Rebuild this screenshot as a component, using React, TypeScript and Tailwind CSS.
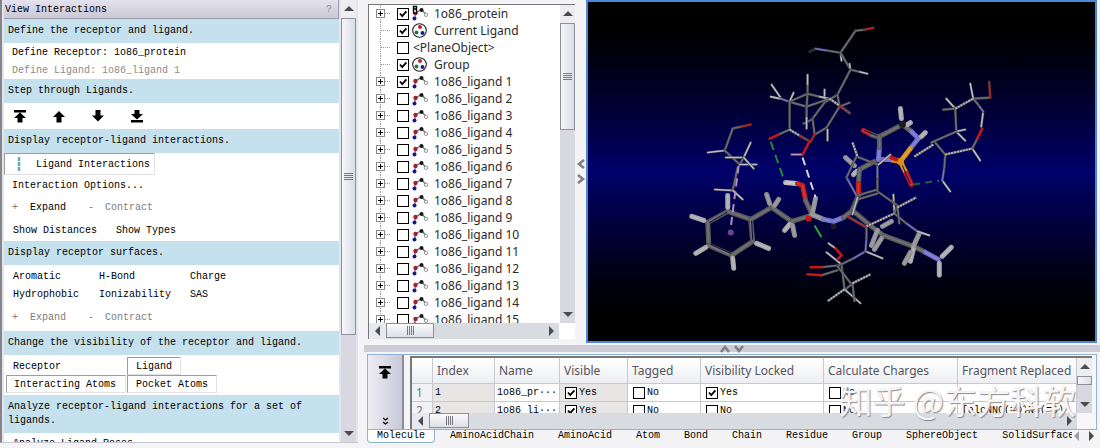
import type { ReactNode } from "react";
import clsx from "clsx";

const UI = "font-['Noto_Sans',sans-serif]";
const MONO = "font-['Liberation_Mono',monospace]";

const CARBON = "#6c6c70";
const HYDROGEN = "#bcbcc2";
const NITROGEN = "#7070cc";
const OXYGEN = "#c41818";
const SULFUR = "#d99210";
const STEM = "#5a5a5c";
const CAP = "#a9a9ad";
const CAP_DARK = "#8f8f92";

type Stick = [number, number, number, number, string];

// residues of the receptor, drawn as thin sticks
const thinSticks: Stick[] = [
  [810, 52, 816, 49, "#222230"],
  [816, 49, 829, 51, NITROGEN],
  [829, 51, 841, 53, CARBON],
  [841, 53, 856, 31, CARBON],
  [856, 31, 865, 30, CARBON],
  [865, 30, 874, 28, OXYGEN],
  [841, 53, 842, 61, HYDROGEN],
  [841, 53, 851, 70, CARBON],
  [851, 70, 850, 64, HYDROGEN],
  [851, 70, 860, 72, CARBON],
  [860, 72, 868, 74, HYDROGEN],
  [851, 70, 838, 95, CARBON],
  [838, 95, 825, 103, CARBON],
  [825, 103, 813, 119, CARBON],
  [813, 119, 815, 135, CARBON],
  [815, 135, 827, 128, CARBON],
  [827, 128, 840, 107, CARBON],
  [840, 107, 838, 95, CARBON],
  [825, 90, 825, 99, HYDROGEN],
  [828, 141, 828, 130, HYDROGEN],
  [804, 124, 812, 120, CARBON],
  [840, 107, 850, 103, CARBON],
  [772, 85, 781, 98, HYDROGEN],
  [771, 97, 780, 99, HYDROGEN],
  [781, 99, 793, 103, NITROGEN],
  [793, 103, 807, 107, CARBON],
  [807, 107, 807, 118, CARBON],
  [807, 118, 807, 129, HYDROGEN],
  [807, 107, 808, 94, CARBON],
  [808, 94, 808, 85, CARBON],
  [808, 85, 808, 75, HYDROGEN],
  [808, 94, 790, 102, CARBON],
  [808, 94, 820, 97, CARBON],
  [820, 97, 829, 99, HYDROGEN],
  [807, 107, 830, 99, CARBON],
  [790, 102, 794, 93, HYDROGEN],
  [790, 102, 790, 130, CARBON],
  [790, 130, 779, 135, CARBON],
  [815, 135, 811, 142, OXYGEN],
  [803, 155, 792, 155, "#c89ab8"],
  [733, 129, 742, 127, CARBON],
  [742, 127, 751, 125, OXYGEN],
  [733, 129, 725, 151, CARBON],
  [725, 151, 708, 153, HYDROGEN],
  [725, 151, 740, 165, CARBON],
  [726, 158, 744, 158, HYDROGEN],
  [744, 158, 751, 143, HYDROGEN],
  [744, 158, 740, 165, CARBON],
  [740, 165, 757, 165, HYDROGEN],
  [744, 158, 754, 169, HYDROGEN],
  [738, 168, 733, 191, CARBON],
  [733, 191, 715, 190, HYDROGEN],
  [733, 191, 743, 200, HYDROGEN],
  [829, 244, 836, 249, HYDROGEN],
  [827, 253, 842, 265, HYDROGEN],
  [822, 268, 840, 266, CARBON],
  [822, 276, 838, 271, CARBON],
  [842, 265, 845, 290, CARBON],
  [838, 267, 852, 285, CARBON],
  [852, 285, 845, 291, CARBON],
  [845, 290, 861, 304, HYDROGEN],
  [853, 284, 855, 302, CARBON],
  [842, 265, 854, 259, CARBON],
  [854, 259, 866, 252, NITROGEN],
  [866, 252, 883, 259, HYDROGEN],
  [866, 252, 867, 239, NITROGEN],
  [867, 239, 867, 227, CARBON],
  [895, 214, 894, 195, HYDROGEN],
  [895, 214, 907, 224, CARBON],
  [907, 224, 918, 232, NITROGEN],
  [918, 232, 930, 236, HYDROGEN],
  [878, 192, 898, 206, CARBON],
  [898, 206, 895, 214, CARBON],
  [898, 206, 900, 224, CARBON],
  [878, 192, 878, 178, CARBON],
  [878, 178, 878, 164, NITROGEN],
  [878, 190, 858, 196, CARBON],
  [878, 194, 858, 200, CARBON],
  [858, 198, 847, 178, NITROGEN],
  [847, 178, 857, 157, CARBON],
  [857, 157, 878, 165, CARBON],
  [858, 198, 853, 215, HYDROGEN],
  [879, 165, 891, 155, HYDROGEN],
  [943, 181, 951, 192, HYDROGEN],
  [943, 181, 945, 168, NITROGEN],
  [945, 168, 946, 155, CARBON],
  [946, 155, 935, 142, CARBON],
  [973, 149, 981, 161, HYDROGEN],
  [973, 149, 978, 139, CARBON],
  [982, 127, 984, 112, HYDROGEN],
  [984, 112, 979, 105, NITROGEN],
  [979, 105, 974, 99, CARBON],
  [974, 99, 991, 98, CARBON],
  [991, 98, 990, 82, OXYGEN],
  [974, 99, 971, 84, HYDROGEN],
  [956, 109, 947, 99, HYDROGEN],
  [956, 109, 944, 110, CARBON],
  [956, 109, 957, 132, CARBON],
  [957, 132, 966, 141, HYDROGEN],
  [957, 132, 966, 130, HYDROGEN],
  [957, 132, 932, 143, CARBON],
];

const mediumSticks: Stick[] = [
  [779, 135, 770, 139, OXYGEN],
  [810, 142, 803, 155, OXYGEN],
  [836, 249, 842, 256, OXYGEN],
  [842, 256, 838, 260, OXYGEN],
  [811, 268, 822, 268, OXYGEN],
  [808, 275, 822, 276, OXYGEN],
  [978, 139, 983, 129, OXYGEN],
];

// partial double bonds, shown as dotted sticks
const dottedSticks: Stick[] = [
  [790, 130, 800, 136, HYDROGEN],
  [800, 136, 809, 141, OXYGEN],
  [830, 99, 840, 106, HYDROGEN],
  [840, 106, 851, 114, OXYGEN],
  [956, 109, 974, 99, HYDROGEN],
  [946, 155, 973, 149, HYDROGEN],
  [934, 145, 915, 157, HYDROGEN],
  [853, 143, 858, 157, HYDROGEN],
  [867, 227, 895, 214, HYDROGEN],
  [898, 208, 917, 198, HYDROGEN],
  [848, 217, 867, 228, OXYGEN],
  [845, 290, 828, 302, HYDROGEN],
  [853, 284, 871, 275, HYDROGEN],
];

// the docked ligand, drawn as thick sticks
const thickSticks: Stick[] = [
  [728, 212, 708, 223, STEM],
  [708, 223, 709, 246, STEM],
  [709, 246, 732, 256, STEM],
  [732, 256, 753, 242, STEM],
  [753, 242, 751, 220, STEM],
  [751, 220, 728, 212, STEM],
  [728, 208, 728, 196, CAP],
  [704, 221, 692, 217, CAP],
  [706, 248, 696, 254, CAP],
  [733, 259, 734, 269, CAP],
  [757, 244, 769, 249, CAP],
  [751, 220, 772, 208, STEM],
  [772, 208, 792, 222, STEM],
  [792, 222, 812, 216, STEM],
  [770, 204, 767, 195, CAP_DARK],
  [775, 206, 779, 200, CAP_DARK],
  [790, 225, 785, 231, CAP],
  [793, 226, 795, 236, CAP_DARK],
  [786, 183, 797, 184, "#bfbfc4"],
  [798, 184, 803, 186, OXYGEN],
  [803, 186, 806, 201, OXYGEN],
  [806, 201, 812, 214, STEM],
  [813, 213, 816, 199, CAP_DARK],
  [812, 215, 824, 220, CAP_DARK],
  [824, 220, 834, 222, NITROGEN],
  [834, 222, 844, 218, NITROGEN],
  [844, 218, 853, 211, STEM],
  [853, 211, 872, 227, STEM],
  [872, 227, 884, 236, STEM],
  [884, 236, 914, 247, STEM],
  [914, 247, 926, 253, STEM],
  [926, 253, 939, 260, NITROGEN],
  [943, 257, 952, 248, CAP],
  [940, 264, 940, 276, CAP],
  [878, 231, 872, 246, CAP_DARK],
  [882, 239, 875, 250, CAP_DARK],
  [883, 227, 892, 222, CAP_DARK],
  [914, 247, 920, 234, CAP_DARK],
  [914, 250, 911, 262, CAP],
  [911, 253, 905, 264, CAP_DARK],
  [864, 131, 872, 135, OXYGEN],
  [872, 135, 880, 138, STEM],
  [880, 137, 903, 125, STEM],
  [903, 125, 912, 132, STEM],
  [912, 132, 919, 139, NITROGEN],
  [919, 139, 911, 149, NITROGEN],
  [911, 149, 901, 162, SULFUR],
  [901, 162, 890, 160, SULFUR],
  [890, 160, 879, 160, NITROGEN],
  [879, 160, 880, 148, NITROGEN],
  [880, 148, 880, 137, STEM],
  [902, 119, 901, 109, CAP],
  [908, 125, 911, 123, CAP],
  [922, 137, 926, 133, CAP],
  [875, 162, 860, 170, STEM],
  [855, 166, 846, 158, CAP_DARK],
  [857, 172, 854, 175, CAP],
  [860, 170, 859, 184, STEM],
  [859, 184, 859, 196, OXYGEN],
  [859, 196, 853, 210, STEM],
  [901, 162, 907, 174, SULFUR],
  [907, 174, 912, 185, OXYGEN],
];

function Molecule() {
  return (
    <svg
      viewBox="588 3 508 338"
      preserveAspectRatio="xMidYMid meet"
      className="h-full w-full"
      role="img"
      aria-label="Ligand in the binding site"
      strokeLinecap="round"
    >
      {thickSticks.map(([x1, y1, x2, y2, c], i) => (
        <g key={i}>
          <line x1={x1} y1={y1} x2={x2} y2={y2} stroke={c} strokeWidth="5" />
          <line x1={x1} y1={y1} x2={x2} y2={y2} stroke="#fff" strokeOpacity="0.14" strokeWidth="2" />
        </g>
      ))}
      {thinSticks.map(([x1, y1, x2, y2, c], i) => (
        <g key={i}>
          <line x1={x1} y1={y1} x2={x2} y2={y2} stroke="#3c3c42" strokeWidth="2.6" />
          <line x1={x1} y1={y1} x2={x2} y2={y2} stroke={c} strokeWidth="1.6" />
        </g>
      ))}
      {dottedSticks.map(([x1, y1, x2, y2, c], i) => (
        <g key={i} strokeLinecap="butt">
          <line x1={x1} y1={y1} x2={x2} y2={y2} stroke="#56565a" strokeWidth="2.6" />
          <line x1={x1} y1={y1} x2={x2} y2={y2} stroke={c} strokeWidth="1.8" strokeDasharray="2 1" />
        </g>
      ))}
      {mediumSticks.map(([x1, y1, x2, y2, c], i) => (
        <line key={i} x1={x1} y1={y1} x2={x2} y2={y2} stroke={c} strokeWidth="2.6" />
      ))}
      {/* gap between the two strokes of each double bond */}
      <path
        d="M727 213l-17 10M711 245l20 9M752 222l1 18M903 166l8 18M865 131l12 5"
        stroke="#0c0c30"
        strokeWidth="1"
      />
      <circle cx="903" cy="125" r="3.5" fill="#1c1c1e" />
      <circle cx="834" cy="227" r="3" fill="#1c1c28" />
      <circle cx="901" cy="162" r="3.5" fill={SULFUR} />
      <path d="M892 158l5 2" stroke={OXYGEN} strokeWidth="4" />
      <circle cx="809" cy="219" r="3" fill={OXYGEN} />
      <circle cx="731" cy="233" r="3" fill="#6a4496" />
      <g fill="none" strokeLinecap="butt" strokeWidth="2">
        <path d="M771 142l14 40" stroke="#1f8a32" strokeDasharray="9 5" />
        <path d="M815 226l7 12" stroke="#24a838" />
        <path d="M914 185l26-4" stroke="#146a35" strokeDasharray="7 5" />
        <path d="M803 158l13 40" stroke="#d8d8e4" strokeDasharray="8 5" />
        <path d="M739 166l-8 62" stroke="#b38cc6" strokeDasharray="8 5" />
      </g>
    </svg>
  );
}

type Direction = "up" | "down" | "left" | "right";

function Triangle({ dir }: { dir: Direction }) {
  const d = {
    up: "M0 7L5 2l5 5z",
    down: "M0 3l5 5 5-5z",
    left: "M7 0L2 5l5 5z",
    right: "M3 0l5 5-5 5z",
  }[dir];
  return (
    <svg viewBox="0 0 10 10" className="size-[10px] shrink-0" aria-hidden="true">
      <path d={d} fill="#4b4b4f" />
    </svg>
  );
}

function Chevron({ dir }: { dir: Direction }) {
  const d = {
    up: "M1 8l4-5 4 5",
    down: "M1 2l4 5 4-5",
    left: "M8 1L3 5l5 4",
    right: "M2 1l5 4-5 4",
  }[dir];
  return (
    <svg viewBox="0 0 10 10" className="size-[10px] shrink-0" aria-hidden="true">
      <path d={d} fill="none" stroke="#808084" strokeWidth="2.6" />
    </svg>
  );
}

function Grip({ vertical }: { vertical?: boolean }) {
  return (
    <svg viewBox="0 0 9 9" className="size-[9px] shrink-0" aria-hidden="true">
      <path
        d={vertical ? "M1.5 0v9M3.5 0v9M5.5 0v9M7.5 0v9" : "M0 1.5h9M0 3.5h9M0 5.5h9M0 7.5h9"}
        stroke="#77777d"
      />
    </svg>
  );
}

function VScroll({ thumb, grip = true }: { thumb: string; grip?: boolean }) {
  return (
    <div className="flex w-[15px] shrink-0 flex-col items-center bg-[#d8d9e0]">
      <button aria-label="Scroll up" className="flex h-[18px] w-full shrink-0 items-center justify-center bg-[#eeeef1]">
        <Triangle dir="up" />
      </button>
      <div className="flex min-h-0 w-full flex-1">
        <div
          className={clsx(
            "flex w-full items-center justify-center border border-[#8d9098] bg-linear-to-r from-[#f6f7fa] to-[#d9dde6]",
            thumb
          )}
        >
          {grip && <Grip />}
        </div>
      </div>
      <button aria-label="Scroll down" className="flex h-[18px] w-full shrink-0 items-center justify-center">
        <Triangle dir="down" />
      </button>
    </div>
  );
}

function HScroll({ thumb }: { thumb: string }) {
  return (
    <div className="flex h-[16px] shrink-0 items-center bg-[#d8dbe0]">
      <button aria-label="Scroll left" className="flex h-full w-[17px] items-center justify-center bg-[#e8e9ee]">
        <Triangle dir="left" />
      </button>
      <div className="h-full flex-1">
        <div
          className={clsx(
            "flex h-[15px] items-center justify-center border border-[#8d9098] bg-linear-to-b from-[#fbfbfd] to-[#dcdfe6]",
            thumb
          )}
        >
          <Grip vertical />
        </div>
      </div>
      <button aria-label="Scroll right" className="flex h-full w-[17px] items-center justify-center">
        <Triangle dir="right" />
      </button>
    </div>
  );
}

function CheckBox({ checked, label }: { checked: boolean; label: string }) {
  return (
    <span className="grid size-[12px] shrink-0">
      <input
        type="checkbox"
        defaultChecked={checked}
        aria-label={label}
        className="peer col-start-1 row-start-1 size-[12px] appearance-none border border-black bg-white"
      />
      <svg
        viewBox="0 0 12 12"
        className="pointer-events-none invisible col-start-1 row-start-1 size-[12px] peer-checked:visible"
        aria-hidden="true"
      >
        <path d="M3 5.5l2.2 2.6L9.4 3.4" fill="none" stroke="#000" strokeWidth="1.8" />
      </svg>
    </span>
  );
}

function SectionTitle({ children }: { children: ReactNode }) {
  return <h2 className="bg-[#c5e1ed] px-1 py-[5px] leading-[14px]">{children}</h2>;
}

const inset = "border border-[#e2e2e6] border-t-[#9b9ba0] border-l-[#9b9ba0]";

function ExpandRow({ enabled }: { enabled?: boolean }) {
  return (
    <div className="flex items-center pl-2">
      <button disabled={!enabled} className={clsx("flex w-[76px]", !enabled && "text-[#7d7d7d]")}>
        <span className="w-[18px] text-left text-[#7d7d7d]">+</span>Expand
      </button>
      <button disabled className="flex text-[#7d7d7d]">
        <span className="w-[17px] text-left">-</span>Contract
      </button>
    </div>
  );
}

const stepIcons = [
  { label: "First ligand", d: "M0 0h12v2.5H0zM6 2.5l6 5.5H8.5v4.5h-5V8H0z" },
  { label: "Previous ligand", d: "M6 1l6 6H8.5v5.5h-5V7H0z" },
  { label: "Next ligand", d: "M3.5 0h5v5.5H12l-6 6-6-6h3.5z" },
  { label: "Last ligand", d: "M3.5 0h5v4H12L6 9.5 0 4h3.5zM0 10h12v2.5H0z" },
];

function InteractionsPanel() {
  return (
    <aside className={clsx("mb-[2px] flex w-[358px] shrink-0 overflow-hidden border-b border-l-2 border-[#c8c8ce] border-l-[#85858c] text-[10px] text-black", MONO)}>
      <div className="flex min-w-0 flex-1 flex-col border-l-2 border-[#e4e4ec]">
        <header className="flex h-[19px] shrink-0 items-center justify-between border-r border-b border-[#9c9ca6] bg-linear-to-b from-[#e4e2ee] to-[#c9c8d6] px-px">
          <h1>View Interactions</h1>
          <button className="px-[5px] text-[#8b8b93]" aria-label="Help">?</button>
        </header>
        <SectionTitle>Define the receptor and ligand.</SectionTitle>
        <div className="flex flex-col items-start bg-white px-2">
          <button className="h-[18px]">Define Receptor: 1o86_protein</button>
          <button className="h-[18px] text-[#8a8a8a]" disabled>Define Ligand: 1o86_ligand 1</button>
        </div>
        <SectionTitle>Step through Ligands.</SectionTitle>
        <div className="flex h-[26px] shrink-0 items-center gap-[27px] bg-white px-[10px]">
          {stepIcons.map((s) => (
            <button key={s.label} aria-label={s.label}>
              <svg viewBox="0 0 12 13" className="h-[13px] w-[12px]">
                <path d={s.d} />
              </svg>
            </button>
          ))}
        </div>
        <SectionTitle>Display receptor-ligand interactions.</SectionTitle>
        <div className="grid grid-rows-[22px_20px_24px_22px] bg-white">
          <button className={clsx("flex items-center gap-[15px] justify-self-start pr-1 pl-[12px] whitespace-nowrap", inset)}>
            <svg viewBox="0 0 4 14" className="h-[14px] w-[4px] shrink-0" aria-hidden="true">
              <path d="M2 0v14" stroke="#62aac6" strokeWidth="2.5" strokeDasharray="4 1" />
            </svg>
            Ligand Interactions
          </button>
          <button className="justify-self-start px-2">Interaction Options...</button>
          <ExpandRow enabled />
          <div className="flex gap-[19px] pl-[9px]">
            <button>Show Distances</button>
            <button>Show Types</button>
          </div>
        </div>
        <SectionTitle>Display receptor surfaces.</SectionTitle>
        <div className="bg-white pt-[2px]">
          <div className="grid auto-rows-[18px] grid-cols-[86px_91px_1fr] justify-items-start pl-[9px]">
            {["Aromatic", "H-Bond", "Charge", "Hydrophobic", "Ionizability", "SAS"].map((name) => (
              <button key={name}>{name}</button>
            ))}
          </div>
          <div className="grid h-[28px]">
            <ExpandRow />
          </div>
        </div>
        <SectionTitle>Change the visibility of the receptor and ligand.</SectionTitle>
        <div className="grid auto-rows-[18px] grid-cols-[120px_1fr] gap-x-px bg-white px-[2px] py-[2px]">
          <button className="px-[7px] text-left">Receptor</button>
          <button className={clsx("justify-self-start px-[8px]", inset)}>Ligand</button>
          <button className={clsx("px-[7px] text-left", inset)}>Interacting Atoms</button>
          <button className={clsx("justify-self-start px-[8px]", inset)}>Pocket Atoms</button>
        </div>
        <SectionTitle>Analyze receptor-ligand interactions for a set of ligands.</SectionTitle>
        <div className="flex-1 bg-white px-[9px] pt-[3px]">
          <button>Analyze Ligand Poses</button>
        </div>
      </div>
      <div className="flex border-x-2 border-[#e4e4ec]">
        <VScroll thumb="h-[78%]" />
      </div>
    </aside>
  );
}

function AtomsIcon({ locked }: { locked?: boolean }) {
  return (
    <svg viewBox="0 0 17 17" className="size-[17px] shrink-0" aria-hidden="true">
      <path d="M2.5 14l1-6 6-3.500 4.500 5" fill="none" stroke="#6d6d72" strokeWidth="1.2" />
      <circle cx="3.5" cy="8" r="2.2" fill="#a02128" />
      <circle cx="9.5" cy="5" r="2" fill="#151515" />
      <circle cx="2.5" cy="13.5" r="2" fill="#16168e" />
      <circle cx="14" cy="9.8" r="1.7" fill="#fff" stroke="#77777c" strokeWidth="0.8" />
      {locked && <path d="M1.500 4V1.500h3V4M1.500 4h3v4h-3z" fill="#fff" stroke="#000" strokeWidth="1.4" />}
    </svg>
  );
}

function GroupIcon() {
  return (
    <svg viewBox="0 0 17 17" className="size-[17px] shrink-0" aria-hidden="true">
      <circle cx="7.5" cy="8.5" r="6.8" fill="#fff" stroke="#222" strokeWidth="1.1" />
      <circle cx="8" cy="5" r="2" fill="#c2202b" />
      <circle cx="4.5" cy="10.5" r="2" fill="#1d7a4a" />
      <circle cx="10.5" cy="11" r="2" fill="#1b1b96" />
    </svg>
  );
}

type TreeItem = {
  name: string;
  icon?: "atoms" | "locked" | "group";
  expandable?: boolean;
  checked?: boolean;
};

const treeItems: TreeItem[] = [
  { name: "1o86_protein", icon: "locked", expandable: true, checked: true },
  { name: "Current Ligand", icon: "group", checked: true },
  { name: "<PlaneObject>" },
  { name: "Group", icon: "group", checked: true },
  ...Array.from({ length: 15 }, (_, i): TreeItem => ({
    name: `1o86_ligand ${i + 1}`,
    icon: "atoms",
    expandable: true,
    checked: i === 0,
  })),
];

function TreeRow({ item }: { item: TreeItem }) {
  return (
    <li className="flex h-[17px] items-center">
      <svg viewBox="0 0 22 17" className="h-[17px] w-[22px] shrink-0" aria-hidden="true">
        <path d="M5.5 0v17M6 8.5h10" stroke="#9a9a9e" strokeDasharray="1 1" />
        {item.expandable && (
          <>
            <rect x="1.5" y="4.5" width="8" height="8" fill="#fff" stroke="#8a8a90" />
            <path d="M3 8.5h5M5.5 6v5" stroke="#000" />
          </>
        )}
      </svg>
      <CheckBox checked={!!item.checked} label={item.name} />
      {item.icon && (
        <span className="w-[25px] shrink-0 pl-[3px]">
          {item.icon === "group" ? <GroupIcon /> : <AtomsIcon locked={item.icon === "locked"} />}
        </span>
      )}
      <span className={clsx("whitespace-nowrap", !item.icon && "pl-1")}>{item.name}</span>
    </li>
  );
}

function TreePanel() {
  return (
    <section className={clsx("flex w-[207px] shrink-0 flex-col border-t border-l border-[#77777c] bg-white text-[12px] leading-[17px] text-[#2a2a2e]", UI)}>
      <div className="flex min-h-0 flex-1">
        <ul className="min-w-0 flex-1 overflow-hidden pl-[6px]">
          {treeItems.map((item) => (
            <TreeRow key={item.name} item={item} />
          ))}
        </ul>
        <VScroll thumb="h-[38%]" />
      </div>
      <div className="pr-[16px]">
        <HScroll thumb="w-[48px]" />
      </div>
    </section>
  );
}

type MoleculeRow = {
  index: number;
  name: string;
  visible: boolean;
  tagged: boolean;
  locked: boolean;
  charges: boolean;
  fragment: string;
};

const rows: MoleculeRow[] = [
  { index: 1, name: "1o86_pr···", visible: true, tagged: false, locked: true, charges: false, fragment: "" },
  { index: 2, name: "1o86_li···", visible: true, tagged: false, locked: false, charges: false, fragment: "[alcNNC(=O)N3(=O)" },
];

const columns = ["Index", "Name", "Visible", "Tagged", "Visibility Locked", "Calculate Charges", "Fragment Replaced"];

const cell = "border-r border-b border-[#c9cacf] px-1";

function Flag({ on, label }: { on: boolean; label: string }) {
  return (
    <span className="flex items-center gap-[2px] pl-px">
      <CheckBox checked={on} label={label} />
      {on ? "Yes" : "No"}
    </span>
  );
}

function DataTable() {
  return (
    <table className="w-full table-fixed border-separate border-spacing-0 text-left">
      <colgroup>
        <col className="w-[21px]" />
        <col className="w-[62px]" />
        <col className="w-[65px]" />
        <col className="w-[68px]" />
        <col className="w-[73px]" />
        <col className="w-[123px]" />
        <col className="w-[134px]" />
        <col />
      </colgroup>
      <thead className={clsx("bg-linear-to-b from-white to-[#eceef2] text-[12px] text-[#55555c]", UI)}>
        <tr className="h-[26px]">
          <th className={cell} aria-label="Row" />
          {columns.map((c) => (
            <th key={c} className={clsx(cell, "font-normal whitespace-nowrap")}>{c}</th>
          ))}
        </tr>
      </thead>
      <tbody className={clsx("text-[10px] text-black", MONO)}>
        {rows.map((r) => (
          <tr key={r.index} className="h-[18px]">
            <th className={clsx(cell, "bg-[#f1f2f5] text-[12px] leading-[17px] font-normal text-[#77777c]", UI)}>{r.index}</th>
            <td className={clsx(cell, "bg-[#e8e6e4] px-[2px]")}>{r.index}</td>
            <td className={clsx(cell, "px-[2px] whitespace-nowrap")}>{r.name}</td>
            <td className={clsx(cell, "bg-[#e8e6e4]")}><Flag on={r.visible} label={`Visible ${r.index}`} /></td>
            <td className={cell}><Flag on={r.tagged} label={`Tagged ${r.index}`} /></td>
            <td className={cell}><Flag on={r.locked} label={`Visibility Locked ${r.index}`} /></td>
            <td className={cell}><Flag on={r.charges} label={`Calculate Charges ${r.index}`} /></td>
            <td className={clsx(cell, "whitespace-nowrap")}>{r.fragment}</td>
          </tr>
        ))}
      </tbody>
    </table>
  );
}

const tabs = ["AminoAcidChain", "AminoAcid", "Atom", "Bond", "Chain", "Residue", "Group", "SphereObject", "SolidSurface"];

function TabBar() {
  return (
    <nav className={clsx("flex h-[15px] shrink-0 items-start text-[10px] leading-[12px] text-black", MONO)}>
      <button className="h-[13px] w-[68px] shrink-0 rounded-b-sm border border-t-0 border-[#8fb4d2] bg-white">Molecule</button>
      <div className="ml-[15px] flex min-w-0 flex-1 gap-[24px] overflow-hidden">
        {tabs.map((t) => (
          <button key={t} className="shrink-0">{t}</button>
        ))}
      </div>
      <button aria-label="Previous tabs" className="pt-px opacity-50"><Triangle dir="left" /></button>
      <button aria-label="Next tabs" className="px-1 pt-px"><Triangle dir="right" /></button>
    </nav>
  );
}

function TablePanel() {
  return (
    <section className="relative flex shrink-0 flex-col pl-[9px]">
      <div className="mr-[3px] flex h-[76px] gap-[6px] border border-[#8fb4d2] bg-[#f6f6f9] pr-1">
        <div className="flex w-[36px] shrink-0 flex-col items-center justify-between border-r-2 border-[#8c8c98] bg-linear-to-r from-[#eeedf4] to-[#c9c8d8] pt-[11px] pb-[3px]">
          <button aria-label="Scroll to top">
            <svg viewBox="0 0 12 13" className="h-[13px] w-[12px]">
              <path d={stepIcons[0].d} />
            </svg>
          </button>
          <button aria-label="More">
            <svg viewBox="0 0 7 9" className="h-[9px] w-[7px]" fill="none" stroke="#000" strokeWidth="1.3">
              <path d="M1 1l2.5 2L6 1M1 5l2.5 2L6 5" />
            </svg>
          </button>
        </div>
        <div className="mt-px flex min-w-0 flex-1 flex-col border-t-2 border-l-2 border-[#77777c]">
          <div className="flex min-h-0 flex-1">
            <div className="min-w-0 flex-1 overflow-hidden bg-white">
              <DataTable />
            </div>
            <VScroll thumb="h-[9px]" grip={false} />
          </div>
          <div className="pr-[15px]">
            <HScroll thumb="w-[40px]" />
          </div>
        </div>
      </div>
      <TabBar />
      <p className="pointer-events-none absolute top-[26px] right-[24px] font-['Noto_Sans_CJK_SC',sans-serif] text-[33px] leading-[40px] whitespace-nowrap text-[#f4f4f6] [text-shadow:1px_1px_1px_#8b8b90]">
        知乎 @东方科软
      </p>
    </section>
  );
}

export default function App() {
  return (
    <div className="flex h-screen overflow-hidden bg-[#f4f4f6] pb-[3px]">
      <InteractionsPanel />
      <main className="flex min-w-0 flex-1 flex-col">
        <div className="flex min-h-0 flex-1">
          <div className="flex pt-[4px] pb-[4px] pl-[10px]">
            <TreePanel />
          </div>
          <div className="flex w-[11px] shrink-0 flex-col items-center justify-center gap-[5px]">
            <Chevron dir="left" />
            <Chevron dir="right" />
          </div>
          <div className="mr-[3px] min-w-0 flex-1 border-2 border-[#4c86d8] bg-linear-to-b from-black via-[#00006a] to-black">
            <Molecule />
          </div>
        </div>
        <div className="my-[2px] ml-[6px] flex h-[7px] shrink-0 items-center justify-center gap-[4px] bg-[#cdccd6]">
          <Chevron dir="up" />
          <Chevron dir="down" />
        </div>
        <TablePanel />
      </main>
    </div>
  );
}
